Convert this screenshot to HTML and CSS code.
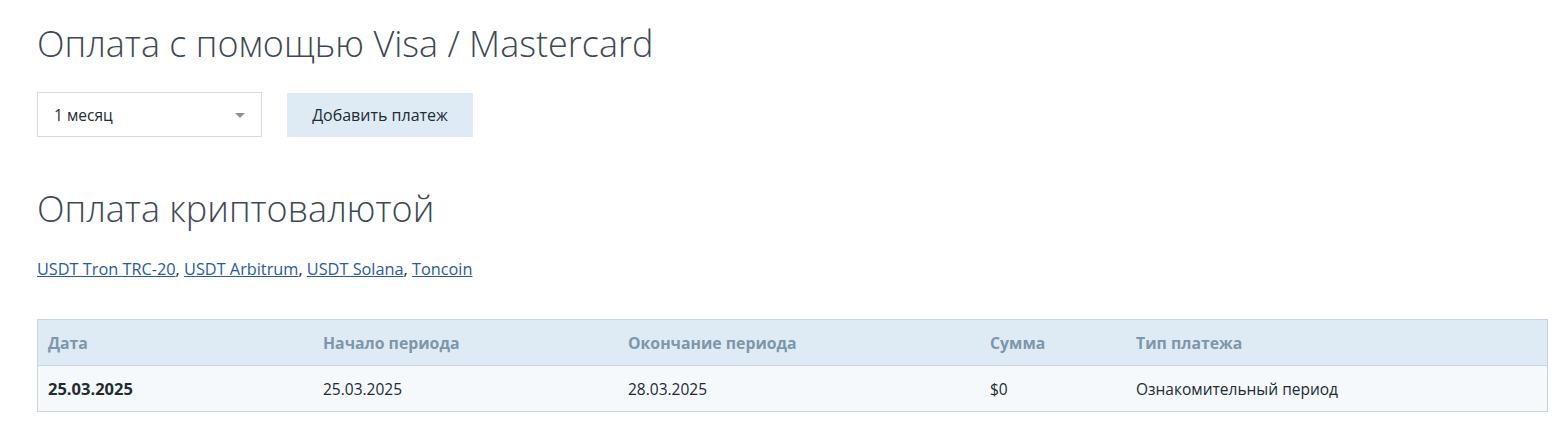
FILE: index.html
```html
<!DOCTYPE html>
<html lang="ru">
<head>
<meta charset="utf-8">
<link rel="stylesheet" href="styles.css">
</head>
<body>
<main class="page">
  <h2 class="title">Оплата с помощью Visa / Mastercard</h2>
  <div class="pay-row">
    <div class="select">
      <span>1 месяц</span>
      <span class="caret"></span>
    </div>
    <button class="btn">Добавить платеж</button>
  </div>
  <h2 class="title title-crypto">Оплата криптовалютой</h2>
  <p class="links"><a href="#">USDT Tron TRC-20</a>, <a href="#">USDT Arbitrum</a>, <a href="#">USDT Solana</a>, <a href="#">Toncoin</a></p>
  <table class="payments">
    <thead>
      <tr>
        <th class="c1">Дата</th>
        <th class="c2">Начало периода</th>
        <th class="c3">Окончание периода</th>
        <th class="c4">Сумма</th>
        <th class="c5">Тип платежа</th>
      </tr>
    </thead>
    <tbody>
      <tr>
        <td class="strong">25.03.2025</td>
        <td>25.03.2025</td>
        <td>28.03.2025</td>
        <td>$0</td>
        <td>Ознакомительный период</td>
      </tr>
    </tbody>
  </table>
</main>
</body>
</html>
```
FILE: styles.css
```css
html, body {
  margin: 0;
  padding: 0;
  background: #ffffff;
}
body {
  font-family: "Open Sans", "Noto Sans", sans-serif;
  color: #222a33;
}
.page {
  padding: 0 4px 0 37px;
}
.title {
  margin: 0;
  padding-top: 20px;
  font-size: 36px;
  line-height: 48px;
  font-weight: 300;
  color: #3d4856;
}
.pay-row {
  display: flex;
  align-items: center;
  gap: 25px;
  margin-top: 24px;
}
.select {
  box-sizing: border-box;
  width: 225px;
  height: 45px;
  border: 1px solid #d6dbe0;
  display: flex;
  align-items: center;
  justify-content: space-between;
  padding: 0 16px 0 16px;
  font-size: 15.5px;
  color: #222a33;
}
.caret {
  width: 0;
  height: 0;
  border-left: 5px solid transparent;
  border-right: 5px solid transparent;
  border-top: 5px solid #8a8f95;
  margin-top: 2px;
}
.btn {
  box-sizing: border-box;
  width: 186px;
  height: 44px;
  border: none;
  background: #deebf5;
  font-family: inherit;
  font-size: 16px;
  color: #222a33;
}
.title-crypto {
  margin-top: 28px;
}
.links {
  margin: 26px 0 0;
  font-size: 16.3px;
  line-height: 20px;
  color: #222a33;
}
.links a {
  color: #2a5a9c;
  text-decoration: underline;
}
.payments {
  width: 100%;
  margin-top: 40px;
  border-collapse: collapse;
  border: 1px solid #c6d5e1;
  font-size: 15.5px;
}
.payments th {
  background: #deebf5;
  color: #7e96aa;
  font-weight: 700;
  font-size: 15.8px;
  text-align: left;
  height: 45px;
  padding: 0 10px;
  border-bottom: 1px solid #c6d5e1;
}
.payments td {
  background: #f5f9fc;
  height: 45px;
  padding: 0 10px;
  color: #222a33;
}
.payments .strong {
  font-weight: 700;
  font-size: 16.5px;
}
.c1 { width: 255px; }
.c2 { width: 285px; }
.c3 { width: 342px; }
.c4 { width: 126px; }
```
